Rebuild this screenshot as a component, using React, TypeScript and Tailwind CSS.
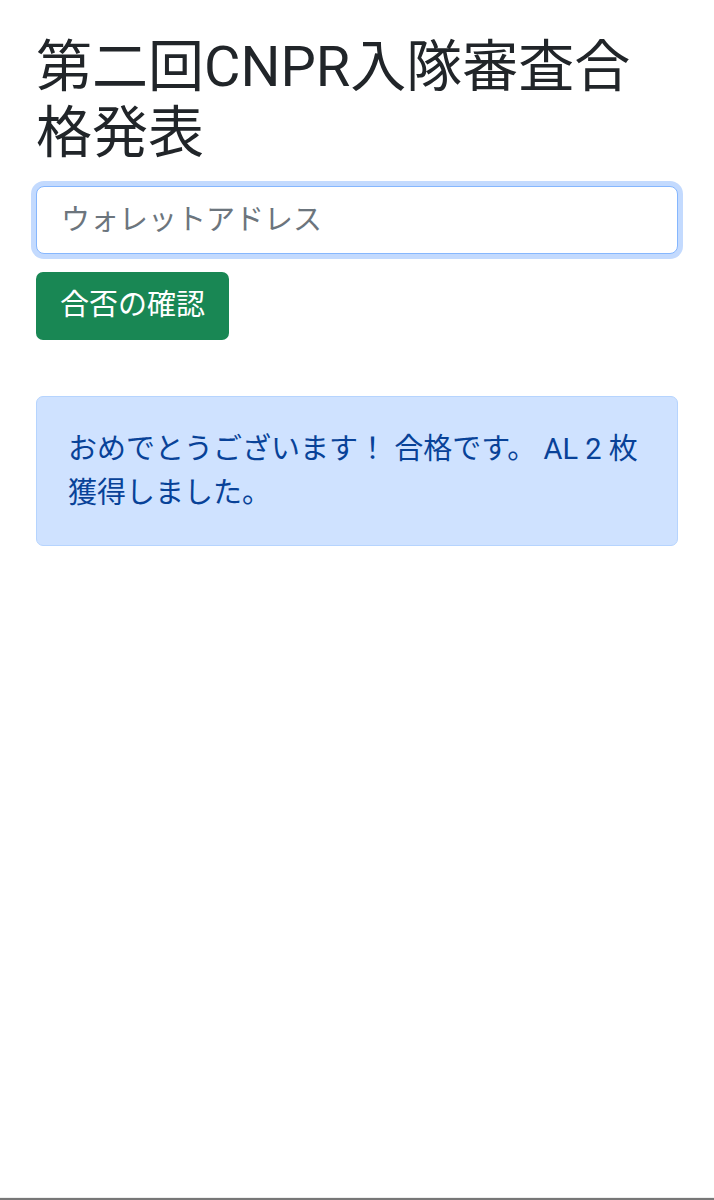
import React, { useState } from 'react';

export default function App() {
  const [address, setAddress] = useState('');

  return (
    <div
      className="flex min-h-[1200px] flex-col bg-white"
      style={{ fontFamily: "Roboto, 'Noto Sans CJK JP', sans-serif" }}
    >
      <div className="px-[36px] pt-[34px]">
        <h1 className="mb-[20px] text-[56px] leading-[66px] font-normal text-[#212529]">
          第二回CNPR入隊審査合格発表
        </h1>

        <input
          autoFocus
          value={address}
          onChange={(e) => setAddress(e.target.value)}
          placeholder="ウォレットアドレス"
          className="block h-[68px] w-full rounded-[8px] border border-[#86b7fe] bg-white px-[24px] text-[29px] text-[#212529] placeholder:text-[#6c757d] outline-none shadow-[0_0_0_5px_#c3dafe]"
        />

        <button className="mt-[18px] h-[68px] rounded-[7px] bg-[#198754] px-[24px] text-[29px] text-white">
          合否の確認
        </button>

        <div className="mt-[56px] rounded-[7px] border border-[#b6d4fe] bg-[#cfe2ff] px-[31px] py-[30px] text-[29px] leading-[44px] text-[#084298]">
          おめでとうございます！ 合格です。 AL 2 枚獲得しました。
        </div>
      </div>

      <div className="mt-auto h-[1px] bg-[#eeeeee]" />
      <div className="h-[2px] bg-[#777777]" />
    </div>
  );
}
